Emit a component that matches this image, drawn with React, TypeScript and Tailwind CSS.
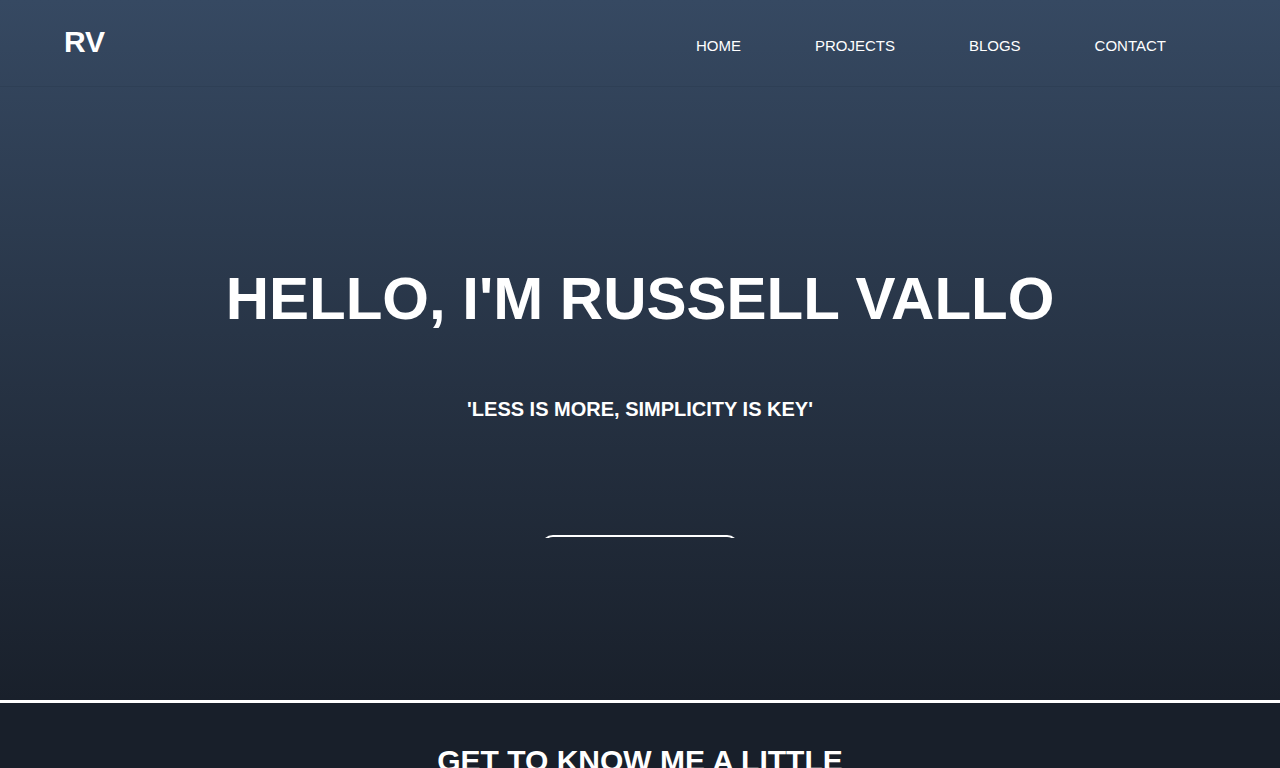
const navLinks = ["HOME", "PROJECTS", "BLOGS", "CONTACT"];

const App = () => {
  return (
    <div className="min-h-screen bg-[#181f2a] font-['Liberation_Sans',Arial,sans-serif] text-white">
      <section className="h-[700px] bg-gradient-to-b from-[#364962] to-[#19202b] flex flex-col">
        <header className="h-[87px] border-b border-[#2e3f55] flex items-center justify-between pl-16 pr-[114px]">
          <div className="text-[30px] font-bold leading-none pb-[2px]">RV</div>
          <nav className="flex gap-[74px] text-[15px] leading-none pt-[4px]">
            {navLinks.map((link) => (
              <a key={link} href="#" className="text-white">
                {link}
              </a>
            ))}
          </nav>
        </header>

        <div className="flex flex-col items-center">
          <h1 className="mt-[182px] text-[60px] font-bold leading-none">HELLO, I'M RUSSELL VALLO</h1>
          <p className="mt-[70px] text-[20px] font-bold leading-none">'LESS IS MORE, SIMPLICITY IS KEY'</p>
          <div className="mt-[116px] h-[3px] w-[198px] overflow-hidden">
            <button className="w-full h-12 rounded-xl border-2 border-white" />
          </div>
        </div>
      </section>

      <div className="h-[3px] bg-white" />

      <section className="flex justify-center pt-[43px] pb-16">
        <h2 className="text-[30px] font-bold leading-none">GET TO KNOW ME A LITTLE</h2>
      </section>
    </div>
  );
};

export default App;
